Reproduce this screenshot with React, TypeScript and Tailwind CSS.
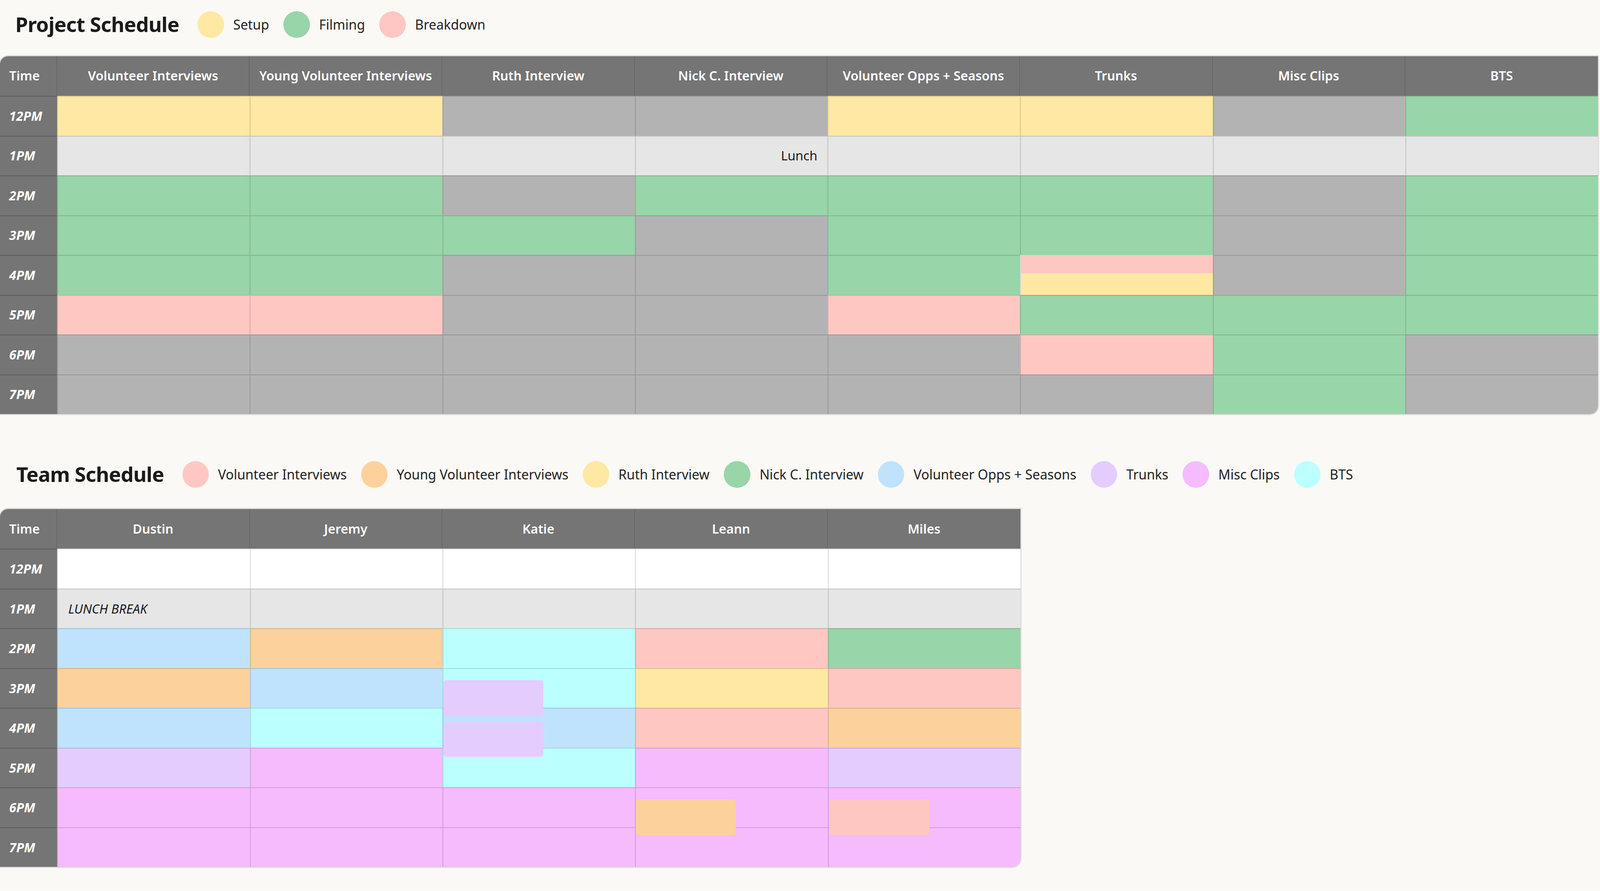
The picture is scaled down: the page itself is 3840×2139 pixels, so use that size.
import React from "react";

const C: Record<string, string> = {
  Y: "bg-[#ffe8a3]",
  G: "bg-[#98d5a8]",
  P: "bg-[#ffc7c2]",
  g: "bg-[#b3b3b3]",
  L: "bg-[#e6e6e6]",
  W: "bg-white",
  O: "bg-[#fcd19c]",
  B: "bg-[#bfe3fd]",
  U: "bg-[#e4ccff]",
  M: "bg-[#f5bbfd]",
  C: "bg-[#bbfffe]",
};

const times = ["12PM", "1PM", "2PM", "3PM", "4PM", "5PM", "6PM", "7PM"];

const proj = [
  "YYggYYgG",
  "LLLLLLLL",
  "GGgGGGgG",
  "GGGgGGgG",
  "GGggGSgG",
  "PPggPGGG",
  "gggggPGg",
  "ggggggGg",
];

const team = ["WWWWW", "LLLLL", "BOCPG", "OBCYP", "BCBPO", "UMCMU", "MMMMM", "MMMMM"];

function Legend({ items }: { items: [string, string][] }) {
  return (
    <div className="flex items-center gap-[14px]">
      {items.map(([c, l]) => (
        <div key={l} className="flex items-center gap-[9px]">
          <div className={`w-[26px] h-[26px] rounded-full ${C[c]}`} />
          <span className="text-[13px] text-[#222]">{l}</span>
        </div>
      ))}
    </div>
  );
}

function Table({
  cols,
  rows,
  extra,
}: {
  cols: string[];
  rows: string[];
  extra?: (r: number, c: number) => React.ReactNode;
}) {
  const gridCols = `56px repeat(${cols.length}, 1fr)`;
  return (
    <div className="rounded-tl-[8px] rounded-br-[8px] overflow-hidden shadow-[0_0_0_1px_rgba(0,0,0,0.12)]">
      <div className="grid h-[39px] bg-[#757575] text-white" style={{ gridTemplateColumns: gridCols }}>
        <div className="flex items-center pl-[9px] text-[12.5px] font-semibold border-r border-black/10">Time</div>
        {cols.map((c) => (
          <div key={c} className="flex items-center justify-center text-[12.5px] font-semibold border-r border-black/10 last:border-r-0">
            {c}
          </div>
        ))}
      </div>
      {rows.map((row, r) => (
        <div key={r} className="grid h-[39px]" style={{ gridTemplateColumns: gridCols }}>
          <div className="bg-[#757575] flex items-center pl-[9px] text-white text-[12.5px] font-bold italic border-t border-black/20">
            {times[r]}
          </div>
          {row.split("").map((ch, c) => (
            <div
              key={c}
              className={`relative border-t border-l border-black/15 ${ch === "S" ? "flex flex-col" : C[ch]}`}
            >
              {ch === "S" && (
                <>
                  <div className="h-[45%] bg-[#ffc7c2]" />
                  <div className="flex-1 bg-[#ffe8a3]" />
                </>
              )}
              {extra && extra(r, c)}
            </div>
          ))}
        </div>
      ))}
    </div>
  );
}

export default function App() {
  return (
    <div className="bg-[#faf9f5] min-h-[873px] w-[1568px] [zoom:2.449] font-['Inter',sans-serif] text-[#1a1a1a]">
      <div className="flex items-center h-[48px] pl-[15px] gap-[18px]">
        <h1 className="text-[20px] font-bold tracking-[-0.3px]">Project Schedule</h1>
        <Legend items={[["Y", "Setup"], ["G", "Filming"], ["P", "Breakdown"]]} />
      </div>
      <div className="mt-[7px] w-[1566px]">
        <Table
          cols={["Volunteer Interviews", "Young Volunteer Interviews", "Ruth Interview", "Nick C. Interview", "Volunteer Opps + Seasons", "Trunks", "Misc Clips", "BTS"]}
          rows={proj}
          extra={(r, c) =>
            r === 1 && c === 3 ? (
              <div className="absolute inset-0 flex items-center justify-end pr-[10px] text-[12.5px]">Lunch</div>
            ) : null
          }
        />
      </div>
      <div className="flex items-center h-[48px] pl-[16px] gap-[18px] mt-[35px]">
        <h1 className="text-[20px] font-bold tracking-[-0.3px]">Team Schedule</h1>
        <Legend
          items={[
            ["P", "Volunteer Interviews"],
            ["O", "Young Volunteer Interviews"],
            ["Y", "Ruth Interview"],
            ["G", "Nick C. Interview"],
            ["B", "Volunteer Opps + Seasons"],
            ["U", "Trunks"],
            ["M", "Misc Clips"],
            ["C", "BTS"],
          ]}
        />
      </div>
      <div className="mt-[10px] w-[1000px]">
        <Table
          cols={["Dustin", "Jeremy", "Katie", "Leann", "Miles"]}
          rows={team}
          extra={(r, c) => {
            if (r === 1 && c === 0)
              return <div className="absolute inset-0 flex items-center pl-[10px] text-[12.5px] italic">LUNCH BREAK</div>;
            if (r === 3 && c === 2)
              return (
                <>
                  <div className="absolute z-10 left-0 top-[11px] w-[98px] h-[35px] rounded-[3px] bg-[#e4ccff]" />
                  <div className="absolute z-10 left-0 top-[52px] w-[98px] h-[34px] rounded-[3px] bg-[#e4ccff]" />
                </>
              );
            if (r === 6 && c === 3)
              return <div className="absolute z-10 left-0 top-[11px] w-[98px] h-[35px] rounded-[3px] bg-[#fcd19c]" />;
            if (r === 6 && c === 4)
              return <div className="absolute z-10 left-[1px] top-[11px] w-[98px] h-[35px] rounded-[3px] bg-[#ffc7c2]" />;
            return null;
          }}
        />
      </div>
    </div>
  );
}
